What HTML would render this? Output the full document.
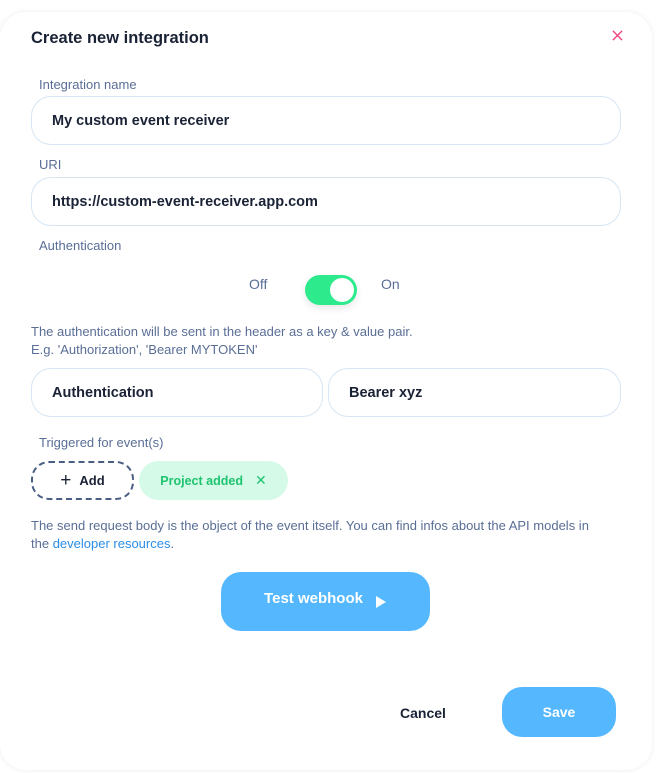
<!DOCTYPE html>
<html><head><style>
*{box-sizing:border-box;margin:0;padding:0}
body{width:656px;height:773px;background:#fff;font-family:"Liberation Sans",sans-serif;position:relative;overflow:hidden;color:#1a2236}
.modal{position:absolute;left:0;top:12px;width:652px;height:758px;border-radius:26px;background:#fff;box-shadow:0 0 6px rgba(0,0,0,0.08)}
.a{position:absolute}
.lbl{font-size:13px;color:#5a6e96;left:39px}
.inp{position:absolute;border:1px solid #d6e6f5;border-radius:20px;background:#fff;font-size:14.5px;font-weight:bold;padding-left:20px;display:flex;align-items:center;color:#1a2236}
.help{font-size:13px;color:#5a6e96;left:31px;line-height:18px;white-space:nowrap}
.btn{position:absolute;background:#55b8ff;color:#fff;border-radius:20px;display:flex;align-items:center;justify-content:center;font-weight:bold;font-size:15px}
</style></head><body>
<div class="modal"></div>
<div class="a" style="left:31px;top:29px;font-size:16.5px;font-weight:bold">Create new integration</div>
<svg class="a" style="left:612px;top:30px" width="11" height="11" viewBox="0 0 12 12"><path d="M1 1L11 11M11 1L1 11" stroke="#f0447f" stroke-width="1.5"/></svg>
<div class="a lbl" style="top:77px">Integration name</div>
<div class="inp" style="left:31px;top:96px;width:590px;height:49px">My custom event receiver</div>
<div class="a lbl" style="top:157px">URI</div>
<div class="inp" style="left:31px;top:177px;width:590px;height:49px">https://custom-event-receiver.app.com</div>
<div class="a lbl" style="top:238px">Authentication</div>
<div class="a" style="left:249px;top:276px;font-size:14px;color:#5a6e96">Off</div>
<div class="a" style="left:305px;top:275px;width:52px;height:30px;border-radius:15px;background:#2deb8c;box-shadow:0 3px 8px rgba(0,0,0,0.1)"><div style="position:absolute;right:3px;top:3px;width:24px;height:24px;border-radius:50%;background:#fff"></div></div>
<div class="a" style="left:381px;top:276px;font-size:14px;color:#5a6e96">On</div>
<div class="a help" style="top:323px">The authentication will be sent in the header as a key &amp; value pair.<br>E.g. 'Authorization', 'Bearer MYTOKEN'</div>
<div class="inp" style="left:31px;top:368px;width:292px;height:49px">Authentication</div>
<div class="inp" style="left:328px;top:368px;width:293px;height:49px">Bearer xyz</div>
<div class="a lbl" style="top:435px">Triggered for event(s)</div>
<div class="a" style="left:31px;top:461px;width:103px;height:39px;border:2px dashed #4a5e84;border-radius:18px;display:flex;align-items:center;justify-content:center;font-size:13px;font-weight:bold"><span style="font-size:19px;font-weight:normal;margin-right:8px">+</span>Add</div>
<div class="a" style="left:139px;top:461px;width:149px;height:39px;background:#d5fae8;border-radius:20px;display:flex;align-items:center;justify-content:center;font-size:12.5px;font-weight:bold;color:#1ec46f">Project added<span style="margin-left:12px;font-weight:normal;font-size:14px">✕</span></div>
<div class="a help" style="top:517px">The send request body is the object of the event itself. You can find infos about the API models in<br>the <span style="color:#2b8ee6">developer resources</span>.</div>
<div class="btn" style="left:221px;top:572px;width:209px;height:59px;padding-bottom:6px">Test webhook<svg style="margin-left:12px;margin-top:6px" width="12" height="14" viewBox="0 0 12 14"><path d="M1 1L11 7L1 13Z" fill="#fff"/></svg></div>
<div class="a" style="left:400px;top:705px;font-size:14px;font-weight:bold">Cancel</div>
<div class="btn" style="left:502px;top:687px;width:114px;height:50px;font-size:14px">Save</div>
</body></html>
